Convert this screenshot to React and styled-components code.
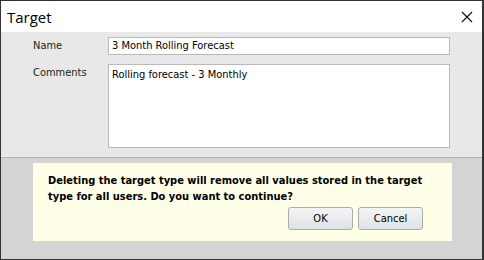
import styled, { createGlobalStyle } from "styled-components";

const GlobalStyle = createGlobalStyle`
  html, body {
    margin: 0;
    padding: 0;
    background: #ffffff;
  }
  * { box-sizing: border-box; }
`;

const Dialog = styled.div`
  width: 484px;
  height: 260px;
  border: 1px solid #333333;
  border-right-width: 2px;
  display: flex;
  flex-direction: column;
  font-family: "DejaVu Sans Condensed", "DejaVu Sans", Tahoma, sans-serif;
  font-size: 11px;
  color: #000;
  overflow: hidden;
`;

const Header = styled.div`
  height: 31px;
  background: #ffffff;
  display: flex;
  align-items: center;
  justify-content: space-between;
  padding: 0 8px 0 6px;
`;

const Title = styled.h1`
  margin: 0;
  font-family: "Open Sans", "Noto Sans", sans-serif;
  font-weight: 400;
  font-size: 15px;
  color: #000;
`;

const CloseButton = styled.button`
  border: none;
  background: none;
  padding: 0;
  width: 14px;
  height: 14px;
  display: flex;
  align-items: center;
  justify-content: center;
  cursor: pointer;
`;

const Form = styled.div`
  height: 126px;
  background: #e8e8e8;
  border-bottom: 1px solid #b4b4b4;
  padding: 5px 32px 0 32px;
  display: grid;
  grid-template-columns: 75px 1fr;
  grid-template-rows: 18px 84px;
  row-gap: 9px;
`;

const Label = styled.label`
  color: #222;
  padding-top: ${(p) => p.$top || 2}px;
`;

const Field = styled.div`
  background: #ffffff;
  border: 1px solid #b9b9b9;
  padding: ${(p) => (p.$multi ? "4px 3px" : "2px 3px")};
  line-height: 12px;
`;

const Footer = styled.div`
  flex: 1;
  background: #d4d4d4;
  padding: 5px 30px 0 32px;
`;

const Notice = styled.div`
  background: #ffffe8;
  height: 78px;
  padding: 10px 14px 0 15px;
  display: flex;
  flex-direction: column;
`;

const Message = styled.p`
  margin: 0;
  font-weight: bold;
  line-height: 16px;
`;

const Actions = styled.div`
  display: flex;
  justify-content: flex-end;
  gap: 5px;
  margin-top: 2px;
  padding-right: 15px;
`;

const Button = styled.button`
  width: 65px;
  height: 23px;
  border: 1px solid #acacac;
  border-radius: 3px;
  background: linear-gradient(#f4f5f6, #dfe2e5);
  font-family: "DejaVu Sans Condensed", "DejaVu Sans", Tahoma, sans-serif;
  font-size: 11px;
  color: #000;
  padding: 0;
`;

export default function App() {
  return (
    <>
      <GlobalStyle />
      <Dialog>
        <Header>
          <Title>Target</Title>
          <CloseButton aria-label="Close">
            <svg width="12" height="12" viewBox="0 0 12 12">
              <path d="M1 1 L11 11 M11 1 L1 11" stroke="#111" strokeWidth="1.2" />
            </svg>
          </CloseButton>
        </Header>
        <Form>
          <Label>Name</Label>
          <Field>3 Month Rolling Forecast</Field>
          <Label $top={0}>Comments</Label>
          <Field $multi>Rolling forecast - 3 Monthly</Field>
        </Form>
        <Footer>
          <Notice>
            <Message>
              Deleting the target type will remove all values stored in the target
              type for all users. Do you want to continue?
            </Message>
            <Actions>
              <Button>OK</Button>
              <Button>Cancel</Button>
            </Actions>
          </Notice>
        </Footer>
      </Dialog>
    </>
  );
}
